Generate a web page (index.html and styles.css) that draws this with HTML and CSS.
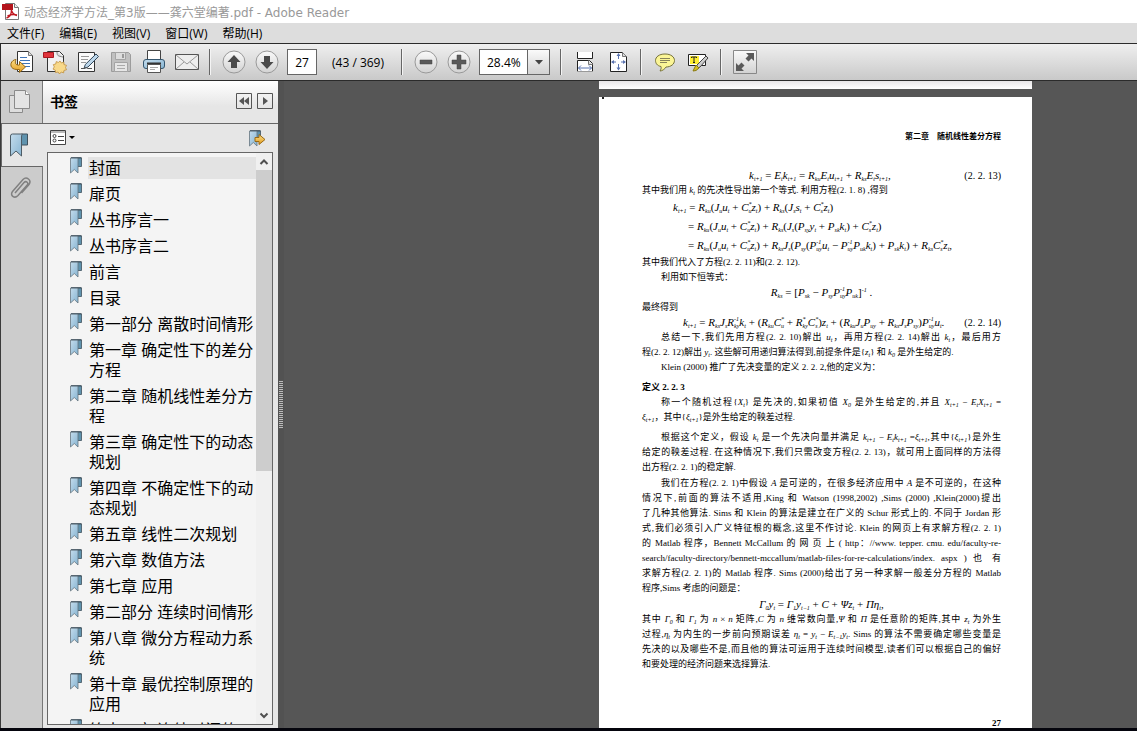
FILE: index.html
```html
<!DOCTYPE html>
<html lang="zh-CN">
<head>
  <meta charset="UTF-8" />
  <meta name="viewport" content="width=device-width, initial-scale=1.0"/>
  <title>动态经济学方法_第3版——龚六堂编著.pdf - Adobe Reader</title>
  <link rel="stylesheet" href="styles.css">
</head>
<body>

  <svg width="0" height="0" class="defs">
    <defs>
      <linearGradient id="blue" x1="0" y1="0" x2="1" y2="1">
        <stop offset="0" stop-color="#c4dcec"/><stop offset="1" stop-color="#86b4d2"/>
      </linearGradient>
      <linearGradient id="gold" x1="0" y1="0" x2="0" y2="1">
        <stop offset="0" stop-color="#fbe08a"/><stop offset="1" stop-color="#e39a1c"/>
      </linearGradient>
      <linearGradient id="round" x1="0" y1="0" x2="0" y2="1">
        <stop offset="0" stop-color="#fafafa"/><stop offset="1" stop-color="#d2d2d2"/>
      </linearGradient>
      <symbol id="bm" viewBox="0 0 12 17">
        <path d="M7.500 1h4v8.500h-4z" fill="#5f93ae" stroke="#40525e" stroke-width=".8"/>
        <path d="M.5 1h7.500v15L4.300 12.500 .5 16z" fill="url(#blue)" stroke="#66757f" stroke-width=".8"/>
        <path d="M1 .7h10.500" stroke="#40525e"/>
      </symbol>
    </defs>
  </svg>

  <header class="titlebar">
    <svg width="17" height="17" viewBox="0 0 17 17">
      <path d="M3.500 .5h9l4 4v12h-13z" fill="#fff" stroke="#777"/>
      <path d="M12.500 .5v4h4" fill="#eee" stroke="#777"/>
      <path d="M0 1h11v6H0z" fill="#b3141c"/>
      <path d="M9 6c1 4 3 6 6 6.500M9.500 7c0 4-2 7-5 8M5.500 13c3-1.500 6-2 9.500-1" fill="none" stroke="#c01820" stroke-width="1.400"/>
    </svg>
    <h1>动态经济学方法_第3版——龚六堂编著.pdf - Adobe Reader</h1>
  </header>

  <nav class="menubar">
    <button>文件(F)</button>
    <button>编辑(E)</button>
    <button>视图(V)</button>
    <button>窗口(W)</button>
    <button>帮助(H)</button>
  </nav>

  <div class="toolbar">
    <button class="tool" title="打开">
      <svg width="24" height="24" viewBox="0 0 24 24">
        <path d="M7.500 1.500h11l4 4v16h-15z" fill="#fff" stroke="#333"/>
        <path d="M18.500 1.500v4h4" fill="#ddd" stroke="#777"/>
        <path d="M10 7.500h7M10 10.500h10M10 13.500h10M12 16.500h8" stroke="#3f74b8"/>
        <path d="M6 9.500C1 10-1 16 3 18.500c2 1.200 4 1 6.500 1v3l6-5.500-6-5.500v3.500c-4 .6-5-2-3.500-5.500z" fill="url(#gold)" stroke="#9a6a14"/>
      </svg>
    </button>
    <button class="tool" title="创建 PDF">
      <svg width="24" height="24" viewBox="0 0 24 24">
        <path d="M4.500 1.500h12l4 4v16h-16z" fill="#f2f2f2" stroke="#333"/>
        <path d="M14 2c0 4 1 4 6 5" fill="#ddd" stroke="#888"/>
        <path d="M.5 2.500h10v5H.5z" fill="#e0343c" stroke="#a81820"/>
        <path d="M17 11l1.400 2 2.400-1 .2 2.600 2.500.7-1 2.200 1 2.300-2.500.6-.4 2.500-2.400-.9L16.500 24l-1.400-2-2.600.6-.2-2.500-2.300-1 1.300-2.200-1-2.300 2.500-.6.4-2.400 2.200.8z" fill="#f8d98a" stroke="#c09040" stroke-width=".8"/>
      </svg>
    </button>
    <button class="tool" title="签名">
      <svg width="24" height="24" viewBox="0 0 24 24">
        <path d="M2.500 2.500h16v19h-16z" fill="#fafafa" stroke="#333"/>
        <path d="M5 6.500h8M5 9.500h7M5 12.500h5" stroke="#999"/>
        <path d="M20 4l2.500 2.500L12 17l-4 1.500 1.300-4z" fill="#bcd6ea" stroke="#33485a"/>
        <path d="M5 18.500h3l2-1 2 1h4" fill="none" stroke="#555"/>
      </svg>
    </button>
    <button class="tool" title="保存">
      <svg width="24" height="24" viewBox="0 0 24 24">
        <path d="M2.500 2.500h17l2 2v17h-19z" fill="#c0c0c0" stroke="#9c9c9c"/>
        <path d="M6.500 2.500h10v7h-10z" fill="#ddd" stroke="#a4a4a4"/>
        <path d="M13 4h2v4h-2z" fill="#999"/>
        <path d="M5.500 12.500h13v9h-13z" fill="#e6e6e6" stroke="#a4a4a4"/>
        <path d="M8 15.500h8M8 18.500h8" stroke="#aaa"/>
      </svg>
    </button>
    <button class="tool" title="打印">
      <svg width="24" height="24" viewBox="0 0 24 24">
        <path d="M5.500 .5h13v10h-13z" fill="#fff" stroke="#444"/>
        <rect x="1.500" y="9.500" width="21" height="9" rx="2.500" fill="url(#blue)" stroke="#35566e"/>
        <path d="M5 13.500h14" stroke="#333" stroke-width="2"/>
        <path d="M5.500 14.500h13v8h-13z" fill="#fff" stroke="#555"/>
        <path d="M8 17.500h8M8 19.500h5" stroke="#aaa"/>
      </svg>
    </button>
    <button class="tool" title="电子邮件">
      <svg width="26" height="24" viewBox="0 0 26 24">
        <path d="M1.500 4.500h23v15h-23z" fill="#eee" stroke="#555"/>
        <path d="M2 5l11 9L24 5M2 19l8-7M24 19l-8-7" fill="none" stroke="#999"/>
      </svg>
    </button>
    <span class="sep"></span>
    <button class="tool" title="上一页">
      <svg width="24" height="24" viewBox="0 0 24 24">
        <circle cx="12" cy="12" r="11" fill="url(#round)" stroke="#999"/>
        <path d="M12 5l6.500 7H15v6H9v-6H5.500z" fill="#4a4a4a"/>
      </svg>
    </button>
    <button class="tool" title="下一页">
      <svg width="24" height="24" viewBox="0 0 24 24">
        <circle cx="12" cy="12" r="11" fill="url(#round)" stroke="#999"/>
        <path d="M12 19l6.500-7H15V6H9v6H5.500z" fill="#4a4a4a"/>
      </svg>
    </button>
    <input class="page-number" type="text" value="27" aria-label="页码">
    <span class="page-count">(43 / 369)</span>
    <span class="sep"></span>
    <button class="tool" title="缩小">
      <svg width="24" height="24" viewBox="0 0 24 24">
        <circle cx="12" cy="12" r="11" fill="url(#round)" stroke="#999"/>
        <path d="M6 10h12v4H6z" fill="#5a5a5a" stroke="#444" stroke-width=".5"/>
      </svg>
    </button>
    <button class="tool" title="放大">
      <svg width="24" height="24" viewBox="0 0 24 24">
        <circle cx="12" cy="12" r="11" fill="url(#round)" stroke="#999"/>
        <path d="M10 5h4v5h5v4h-5v5h-4v-5H5v-4h5z" fill="#5a5a5a" stroke="#444" stroke-width=".5"/>
      </svg>
    </button>
    <div class="zoom">
      <select aria-label="缩放">
        <option>28.4%</option>
        <option>50%</option>
        <option>100%</option>
      </select>
      <svg class="arrow" width="22" height="24" viewBox="0 0 22 24">
        <path d="M0 0h22v24H0z" fill="url(#round)"/>
        <path d="M.5 0v24" stroke="#666"/>
        <path d="M8 10h8l-4 4.500z" fill="#444"/>
      </svg>
    </div>
    <span class="sep"></span>
    <button class="tool" title="适合宽度">
      <svg width="24" height="24" viewBox="0 0 24 24">
        <path d="M4.500 2v6.500h15V2" fill="#fff" stroke="#222"/>
        <path d="M4.500 22v-11.500h12l3 3V22" fill="#fff" stroke="#222"/>
        <path d="M15.500 10.500v4h4" fill="#ddd" stroke="#777"/>
        <path d="M4 21.500h16" stroke="#999"/>
        <path d="M5.500 18h13M8 15.500L5.500 18 8 20.500M16 15.500l2.500 2.500-2.500 2.500" fill="none" stroke="#5b74b0"/>
      </svg>
    </button>
    <button class="tool" title="整页">
      <svg width="24" height="24" viewBox="0 0 24 24">
        <path d="M4.500 2.500h12l4 4v15h-16z" fill="#fff" stroke="#222"/>
        <path d="M16.500 2.500v4h4" fill="#ddd" stroke="#777"/>
        <path d="M12.500 4v5M12.500 14v5M6 12h4M15 12h4" stroke="#5b74b0"/>
        <path d="M10.500 6l2-3 2 3zM10.500 17.500l2 3 2-3zM8 10l-3 2 3 2zM17 10l3 2-3 2z" fill="#5b74b0"/>
      </svg>
    </button>
    <span class="sep"></span>
    <button class="tool" title="添加附注">
      <svg width="24" height="24" viewBox="0 0 24 24">
        <path d="M12 4c6 0 9.500 3 9.500 6.500S18 17 13 17c-1 2-4 4-6 4 1-1.500 1.500-3 1-4.500-4-.7-5.500-3.500-5.500-6C2.500 7 6 4 12 4z" fill="#fbf596" stroke="#77733a"/>
        <path d="M7 8.500h10M7 10.500h10M7 12.500h7" stroke="#88835a"/>
      </svg>
    </button>
    <button class="tool" title="高亮文本">
      <svg width="24" height="24" viewBox="0 0 24 24">
        <path d="M2.500 4.500h17v11h-17z" fill="#fff" stroke="#222"/>
        <path d="M4 6h9v8H4z" fill="#ffee32"/>
        <path d="M5.500 8V7h5v1M8 7v6M7 12.500h2" fill="none" stroke="#222"/>
        <path d="M20 6l2 2-8 9-4 2 1-4z" fill="#ccc" stroke="#444"/>
        <path d="M10 15l3 3-3 2.500-3 .5z" fill="#d8c020" stroke="#8a7a10"/>
      </svg>
    </button>
    <span class="sep"></span>
    <button class="tool" title="阅读模式">
      <svg width="24" height="24" viewBox="0 0 24 24">
        <path d="M.5 .5h23v23H.5z" fill="url(#round)" stroke="#888"/>
        <path d="M13 3h8v8l-2.500-2.500-3 3-3-3 3-3zM11 21H3v-8l2.500 2.500 3-3 3 3-3 3z" fill="#5a5a5a"/>
      </svg>
    </button>
  </div>

  <main class="main">
    <nav class="tabs">
      <button title="页面">
        <svg width="22" height="24" viewBox="0 0 22 24">
          <path d="M.5 5.500h13v17H.5z" fill="#ddd" stroke="#8a8a8a"/>
          <path d="M5.500 .5h11l4 4v14h-15z" fill="#e4e4e4" stroke="#8a8a8a"/>
          <path d="M16.500 .5v4h4" fill="#fff" stroke="#8a8a8a"/>
        </svg>
      </button>
      <button class="active" title="书签">
        <svg width="18" height="24" viewBox="0 0 18 24">
          <path d="M11.500 1h6v11h-6z" fill="#5f93ae" stroke="#40525e"/>
          <path d="M.5 3q0-2 2-2h10q-1 .8-1 3v19L6 18 .5 23z" fill="url(#blue)" stroke="#4d5c66"/>
        </svg>
      </button>
      <button title="附件">
        <svg width="22" height="24" viewBox="0 0 22 24">
          <path d="M6 17L15 6.500c2-2 5 0 3.200 2.500L9 19.500c-3.500 3.600-8.500 0-5.500-4L14 3.500c3.500-3.500 9 .5 6 5L12.500 17" fill="none" stroke="#808080" stroke-width="1.500"/>
        </svg>
      </button>
    </nav>

    <aside class="panel">
      <div class="panel-head">
        <h2>书签</h2>
        <button title="折叠">
          <svg width="16" height="16" viewBox="0 0 16 16"><path d="M.5 .5h15v15H.5z" fill="none" stroke="#555"/><path d="M8 4v8L3 8zM13 4v8L8 8z" fill="#555"/></svg>
        </button>
        <button title="展开">
          <svg width="16" height="16" viewBox="0 0 16 16"><path d="M.5 .5h15v15H.5z" fill="none" stroke="#555"/><path d="M6 4v8l5-4z" fill="#555"/></svg>
        </button>
      </div>
      <div class="panel-tools">
        <button title="选项">
          <svg width="26" height="16" viewBox="0 0 26 16">
            <path d="M.5 .5h15v14H.5z" fill="#fff" stroke="#444"/>
            <path d="M1 2h14" stroke="#bbb" stroke-width="2"/>
            <circle cx="4.500" cy="6" r="1.500" fill="none" stroke="#444"/><circle cx="4.500" cy="10.500" r="1.500" fill="none" stroke="#444"/>
            <path d="M8 6.500h6M8 10.500h6" stroke="#444"/>
            <path d="M19 6h6l-3 3z" fill="#000"/>
          </svg>
        </button>
        <button title="查找当前书签">
          <svg width="17" height="17" viewBox="0 0 17 17">
            <use href="#bm" width="12" height="17"/>
            <path d="M6 7.500h4v-3l6 5-6 5v-3H6z" fill="url(#gold)" stroke="#9a6a14"/>
          </svg>
        </button>
      </div>
      <div class="list-box">
        <ul class="bookmarks">
          <li><svg width="12" height="17"><use href="#bm"/></svg><a class="current" href="#">封面</a></li>
          <li><svg width="12" height="17"><use href="#bm"/></svg><a href="#">扉页</a></li>
          <li><svg width="12" height="17"><use href="#bm"/></svg><a href="#">丛书序言一</a></li>
          <li><svg width="12" height="17"><use href="#bm"/></svg><a href="#">丛书序言二</a></li>
          <li><svg width="12" height="17"><use href="#bm"/></svg><a href="#">前言</a></li>
          <li><svg width="12" height="17"><use href="#bm"/></svg><a href="#">目录</a></li>
          <li><svg width="12" height="17"><use href="#bm"/></svg><a href="#">第一部分 离散时间情形</a></li>
          <li><svg width="12" height="17"><use href="#bm"/></svg><a href="#">第一章 确定性下的差分方程</a></li>
          <li><svg width="12" height="17"><use href="#bm"/></svg><a href="#">第二章 随机线性差分方程</a></li>
          <li><svg width="12" height="17"><use href="#bm"/></svg><a href="#">第三章 确定性下的动态规划</a></li>
          <li><svg width="12" height="17"><use href="#bm"/></svg><a href="#">第四章 不确定性下的动态规划</a></li>
          <li><svg width="12" height="17"><use href="#bm"/></svg><a href="#">第五章 线性二次规划</a></li>
          <li><svg width="12" height="17"><use href="#bm"/></svg><a href="#">第六章 数值方法</a></li>
          <li><svg width="12" height="17"><use href="#bm"/></svg><a href="#">第七章 应用</a></li>
          <li><svg width="12" height="17"><use href="#bm"/></svg><a href="#">第二部分 连续时间情形</a></li>
          <li><svg width="12" height="17"><use href="#bm"/></svg><a href="#">第八章 微分方程动力系统</a></li>
          <li><svg width="12" height="17"><use href="#bm"/></svg><a href="#">第十章 最优控制原理的应用</a></li>
          <li><svg width="12" height="17"><use href="#bm"/></svg><a href="#">第十一章 连续时间的</a></li>
        </ul>
        <div class="scrollbar">
          <svg width="16" height="17" viewBox="0 0 16 17"><path d="M4.500 11L8 7.500l3.500 3.500" fill="none" stroke="#505050" stroke-width="2"/></svg>
          <div class="thumb"></div>
          <svg width="16" height="17" viewBox="0 0 16 17"><path d="M4.500 6.500L8 10l3.500-3.500" fill="none" stroke="#505050" stroke-width="2"/></svg>
        </div>
      </div>
    </aside>

    <div class="splitter"><span class="grip"></span></div>

    <section class="document">
      <div class="sheet previous"></div>
      <article class="sheet current-page">
        <p class="running">第二章　随机线性差分方程</p>

        <div class="eq numbered">
          <span class="math"><i>k</i><sub>t+1</sub> = <i>E</i><sub>t</sub><i>k</i><sub>t+1</sub> = <i>R</i><sub>ku</sub><i>E</i><sub>t</sub><i>u</i><sub>t+1</sub> + <i>R</i><sub>ks</sub><i>E</i><sub>t</sub><i>s</i><sub>t+1</sub>,</span>
          <span class="no">(2. 2. 13)</span>
        </div>
        <p><span>其中我们用 <i>k</i><sub>t</sub> 的先决性导出第一个等式. 利用方程(2. 1. 8) ,得到</span></p>
        <div class="eq steps">
          <span class="math first"><i>k</i><sub>t+1</sub> = <i>R</i><sub>ku</sub>(<i>J</i><sub>u</sub><i>u</i><sub>t</sub> + <i>C</i><b><sup>*</sup><sub>u</sub></b><i>z</i><sub>t</sub>) + <i>R</i><sub>ks</sub>(<i>J</i><sub>s</sub><i>s</i><sub>t</sub> + <i>C</i><b><sup>*</sup><sub>s</sub></b><i>z</i><sub>t</sub>)</span>
          <span class="math">= <i>R</i><sub>ku</sub>(<i>J</i><sub>u</sub><i>u</i><sub>t</sub> + <i>C</i><b><sup>*</sup><sub>u</sub></b><i>z</i><sub>t</sub>) + <i>R</i><sub>ks</sub>(<i>J</i><sub>s</sub>(<i>P</i><sub>sy</sub><i>y</i><sub>t</sub> + <i>P</i><sub>sk</sub><i>k</i><sub>t</sub>) + <i>C</i><b><sup>*</sup><sub>s</sub></b><i>z</i><sub>t</sub>)</span>
          <span class="math">= <i>R</i><sub>ku</sub>(<i>J</i><sub>u</sub><i>u</i><sub>t</sub> + <i>C</i><b><sup>*</sup><sub>u</sub></b><i>z</i><sub>t</sub>) + <i>R</i><sub>ks</sub><i>J</i><sub>s</sub>(<i>P</i><sub>sy</sub>(<i>P</i><b><sup>-1</sup><sub>uy</sub></b><i>u</i><sub>t</sub> − <i>P</i><b><sup>-1</sup><sub>uy</sub></b><i>P</i><sub>uk</sub><i>k</i><sub>t</sub>) + <i>P</i><sub>sk</sub><i>k</i><sub>t</sub>) + <i>R</i><sub>ks</sub><i>C</i><b><sup>*</sup><sub>s</sub></b><i>z</i><sub>t</sub>,</span>
        </div>
        <p><span>其中我们代入了方程(2. 2. 11)和(2. 2. 12).</span></p>
        <p class="indent"><span>利用如下恒等式：</span></p>
        <div class="eq center">
          <span class="math"><i>R</i><sub>ks</sub> = [<i>P</i><sub>sk</sub> − <i>P</i><sub>sy</sub><i>P</i><b><sup>-1</sup><sub>uy</sub></b><i>P</i><sub>uk</sub>]<sup>-1</sup> .</span>
        </div>
        <p><span>最终得到</span></p>
        <div class="eq long">
          <span class="math"><i>k</i><sub>t+1</sub> = <i>R</i><sub>ks</sub><i>J</i><sub>s</sub><i>R</i><b><sup>-1</sup><sub>ky</sub></b><i>k</i><sub>t</sub> + (<i>R</i><sub>ku</sub><i>C</i><b><sup>*</sup><sub>u</sub></b> + <i>R</i><b><sup>*</sup><sub>ky</sub></b><i>C</i><b><sup>*</sup><sub>s</sub></b>)<i>z</i><sub>t</sub> + (<i>R</i><sub>ku</sub><i>J</i><sub>u</sub><i>P</i><sub>uy</sub> + <i>R</i><sub>ks</sub><i>J</i><sub>s</sub><i>P</i><sub>sy</sub>)<i>P</i><b><sup>-1</sup><sub>uy</sub></b><i>u</i><sub>t</sub>.</span>
          <span class="no">(2. 2. 14)</span>
        </div>
        <p class="indent">
          <span>总结一下,我们先用方程(2. 2. 10)解出 <i>u</i><sub>t</sub>，再用方程(2. 2. 14)解出 <i>k</i><sub>t</sub>，最后用方</span>
          <span>程(2. 2. 12)解出 <i>y</i><sub>t</sub>. 这些解可用递归算法得到,前提条件是{<i>z</i><sub>t</sub>} 和 <i>k</i><sub>0</sub> 是外生给定的.</span>
        </p>
        <p class="indent"><span>Klein (2000) 推广了先决变量的定义 2. 2. 2,他的定义为：</span></p>

        <h3>定义 2. 2. 3</h3>
        <p class="indent kai">
          <span>称一个随机过程{<i>X</i><sub>t</sub>} 是先决的,如果初值 <i>X</i><sub>0</sub> 是外生给定的,并且 <i>X</i><sub>t+1</sub> − <i>E</i><sub>t</sub><i>X</i><sub>t+1</sub> =</span>
          <span><i>ξ</i><sub>t+1</sub>，其中{<i>ξ</i><sub>t+1</sub>}是外生给定的鞅差过程.</span>
        </p>

        <p class="indent">
          <span>根据这个定义，假设 <i>k</i><sub>t</sub> 是一个先决向量并满足 <i>k</i><sub>t+1</sub> − <i>E</i><sub>t</sub><i>k</i><sub>t+1</sub> =<i>ξ</i><sub>t+1</sub>,其中{<i>ξ</i><sub>t+1</sub>}是外生</span>
          <span>给定的鞅差过程. 在这种情况下,我们只需改变方程(2. 2. 13)，就可用上面同样的方法得</span>
          <span>出方程(2. 2. 1)的稳定解.</span>
        </p>
        <p class="indent gap">
          <span>我们在方程(2. 2. 1)中假设 <i>A</i> 是可逆的，在很多经济应用中 <i>A</i> 是不可逆的，在这种</span>
          <span>情况下,前面的算法不适用,King 和 Watson (1998,2002) ,Sims (2000) ,Klein(2000)提出</span>
          <span>了几种其他算法. Sims 和 Klein 的算法是建立在广义的 Schur 形式上的. 不同于 Jordan 形</span>
          <span>式,我们必须引入广义特征根的概念,这里不作讨论. Klein 的网页上有求解方程(2. 2. 1)</span>
          <span>的 Matlab 程序，Bennett McCallum 的 网 页 上 ( http：//www. tepper. cmu. edu/faculty-re-</span>
          <span>search/faculty-directory/bennett-mccallum/matlab-files-for-re-calculations/index. aspx ) 也 有</span>
          <span>求解方程(2. 2. 1)的 Matlab 程序. Sims (2000)给出了另一种求解一般差分方程的 Matlab</span>
          <span>程序,Sims 考虑的问题是：</span>
        </p>
        <div class="eq center gap">
          <span class="math"><i>Γ</i><sub>0</sub><i>y</i><sub>t</sub> = <i>Γ</i><sub>1</sub><i>y</i><sub>t−1</sub> + <i>C</i> + <i>Ψz</i><sub>t</sub> + <i>Πη</i><sub>t</sub>,</span>
        </div>
        <p>
          <span>其中 <i>Γ</i><sub>0</sub> 和 <i>Γ</i><sub>1</sub> 为 <i>n</i> × <i>n</i> 矩阵,<i>C</i> 为 <i>n</i> 维常数向量,<i>Ψ</i> 和 <i>Π</i> 是任意阶的矩阵,其中 <i>z</i><sub>t</sub> 为外生</span>
          <span>过程,<i>η</i><sub>t</sub> 为内生的一步前向预期误差 <i>η</i><sub>t</sub> = <i>y</i><sub>t</sub> − <i>E</i><sub>t−1</sub><i>y</i><sub>t</sub>. Sims 的算法不需要确定哪些变量是</span>
          <span>先决的以及哪些不是,而且他的算法可运用于连续时间模型,读者们可以根据自己的偏好</span>
          <span>和要处理的经济问题来选择算法.</span>
        </p>
        <p class="folio">27</p>
      </article>
    </section>
  </main>

</body>
</html>
```

FILE: styles.css
```css
* {
  box-sizing: border-box;
}
body {
  margin: 0;
  height: 100vh;
  display: flex;
  flex-direction: column;
  overflow: hidden;
  background: #555;
  border-bottom: 3px solid #05050d;
  font-family: "Open Sans", "Noto Sans CJK SC", sans-serif;
  font-size: 12px;
  color: #000;
}
h1, h2, h3, p, ul {
  margin: 0;
  padding: 0;
}
button {
  display: flex;
  align-items: center;
  justify-content: center;
  margin: 0;
  padding: 0;
  border: none;
  background: none;
  font: inherit;
  color: inherit;
}
svg {
  display: block;
  flex: none;
}
.defs {
  position: absolute;
}

/* title and menu */
.titlebar {
  flex: none;
  display: flex;
  align-items: center;
  gap: 5px;
  height: 23px;
  padding-left: 2px;
  background: #fff;
}
.titlebar h1 {
  font-family: "DejaVu Sans", "Noto Sans CJK SC", sans-serif;
  font-size: 12px;
  font-weight: normal;
  color: #999;
}
.menubar {
  flex: none;
  display: flex;
  gap: 15px;
  height: 20px;
  padding-left: 7px;
  background: #ddd;
}

/* toolbar */
.toolbar {
  flex: none;
  display: flex;
  align-items: center;
  height: 38px;
  padding-left: 4px;
  border: solid #2b2b2b;
  border-width: 1px 0 1px 1px;
  background: linear-gradient(#efefef, #c9c9c9);
}
.tool {
  width: 33px;
  height: 30px;
}
.sep {
  width: 2px;
  height: 26px;
  margin: 0 6px;
  background: #666;
  border-right: 1px solid #f4f4f4;
}
.page-number {
  width: 30px;
  height: 26px;
  margin-left: 4px;
  padding: 0;
  border: 1px solid #666;
  background: #fff;
  font: inherit;
  text-align: center;
}
.page-count {
  width: 63px;
  margin-left: 15px;
  white-space: nowrap;
}
.zoom {
  position: relative;
  width: 71px;
  margin: 0 4px;
}
.zoom select {
  appearance: none;
  display: block;
  width: 100%;
  height: 26px;
  padding: 0 0 0 7px;
  border: 1px solid #666;
  border-radius: 0;
  background: #fff;
  font: inherit;
  color: #000;
}
.arrow {
  position: absolute;
  top: 1px;
  right: 1px;
  pointer-events: none;
}

/* side tabs */
.main {
  flex: 1;
  min-height: 0;
  display: flex;
  border-left: 1px solid #3a3a3a;
}
.tabs {
  flex: none;
  width: 42px;
  background: #ccc;
  border-right: 1px solid #777;
}
.tabs button {
  width: 41px;
  height: 42px;
  padding-right: 3px;
}
.tabs .active {
  width: 42px;
  height: 44px;
  padding-right: 7px;
  background: #e6e6e6;
  border: 1px solid #666;
  border-right: none;
}

/* bookmark panel */
.panel {
  flex: none;
  display: flex;
  flex-direction: column;
  width: 235px;
  background: #e6e6e6;
}
.panel-head {
  flex: none;
  display: flex;
  align-items: center;
  gap: 5px;
  height: 43px;
  padding: 0 5px 3px 7px;
  border-bottom: 1px solid #666;
  background: linear-gradient(#fff, #e6e6e6 60%);
}
.panel-head h2 {
  flex: 1;
  font-size: 14px;
  font-weight: bold;
}
.panel-tools {
  flex: none;
  display: flex;
  justify-content: space-between;
  align-items: center;
  height: 28px;
  padding: 0 12px 0 7px;
}
.list-box {
  flex: 1;
  min-height: 0;
  display: flex;
  margin: 0 5px 3px 4px;
  border: 1px solid #666;
  background: #f4f4f4;
}
.bookmarks {
  flex: 1;
  padding-top: 2px;
  overflow: hidden;
  list-style: none;
}
.bookmarks li {
  display: flex;
  align-items: flex-start;
  gap: 6px;
  padding: 2px 0 2px 22px;
}
.bookmarks a {
  flex: 1;
  padding: 1px 0 1px 1px;
  font-size: 16px;
  line-height: 20px;
  color: #000;
  text-decoration: none;
}
.bookmarks .current {
  background: #e3e3e3;
}
.scrollbar {
  display: flex;
  flex-direction: column;
  width: 16px;
  background: #f0f0f0;
}
.thumb {
  height: 301px;
  margin-bottom: auto;
  background: #cdcdcd;
}
.splitter {
  flex: none;
  display: flex;
  align-items: center;
  width: 6px;
  padding-left: 1px;
  background: #525252;
}
.grip {
  width: 4px;
  height: 48px;
  background: repeating-linear-gradient(#bbb 0 1px, #555 1px 2px);
}

/* document */
.document {
  flex: 1;
  min-width: 0;
  overflow: hidden;
  background: #565656;
}
.sheet {
  position: relative;
  width: 433px;
  height: 660px;
  margin: 0 105px 0 auto;
  padding: 32px 31px 0 43px;
  background: #fff;
  font-family: "Liberation Serif", "Noto Sans CJK SC", serif;
  font-size: 9px;
  line-height: 15px;
  color: #000;
}
.previous {
  height: 8px;
  margin-bottom: 8px;
  padding: 0;
  background: linear-gradient(#e8e6e8, #fff);
}
/* speck left by the scanner */
.current-page::before {
  content: "";
  position: absolute;
  top: 0;
  left: 3px;
  width: 2px;
  height: 2px;
  background: #222;
}
.sheet p > span {
  display: block;
  height: 15px;
  white-space: nowrap;
  text-align-last: justify;
}
.sheet p > span:last-child {
  text-align-last: left;
}
.sheet .indent > span:first-child {
  padding-left: 19px;
}
.sheet .gap {
  margin-top: 1px;
}
.sheet .running {
  margin-bottom: 24px;
  font-size: 8px;
  font-weight: bold;
  text-align: right;
}
.sheet h3 {
  margin-top: 5px;
  font-size: 9px;
}
.sheet .kai {
  margin-bottom: 5px;
}
sub, sup {
  font-size: 6px;
  font-style: italic;
  line-height: 0;
}
sub {
  vertical-align: -2px;
}
sup {
  vertical-align: 4px;
}
/* upper and lower index on one letter */
b {
  display: inline-flex;
  flex-direction: column;
  margin: -4px 0;
  vertical-align: middle;
  font-weight: normal;
}
b sub, b sup {
  line-height: 7px;
}
.eq {
  display: flex;
  height: 15px;
  white-space: nowrap;
}
.math {
  font-size: 11px;
}
.no {
  font-size: 10px;
}
.numbered {
  padding-left: 107px;
  justify-content: space-between;
}
.steps {
  flex-direction: column;
  height: 57px;
  line-height: 19px;
  padding-left: 46px;
}
.steps .math {
  height: 19px;
}
.steps .first {
  margin-left: -15px;
}
.center {
  justify-content: center;
}
.long {
  padding-left: 41px;
  justify-content: space-between;
}
.sheet .folio {
  margin-top: 44px;
  font-weight: bold;
  text-align: right;
}
```
